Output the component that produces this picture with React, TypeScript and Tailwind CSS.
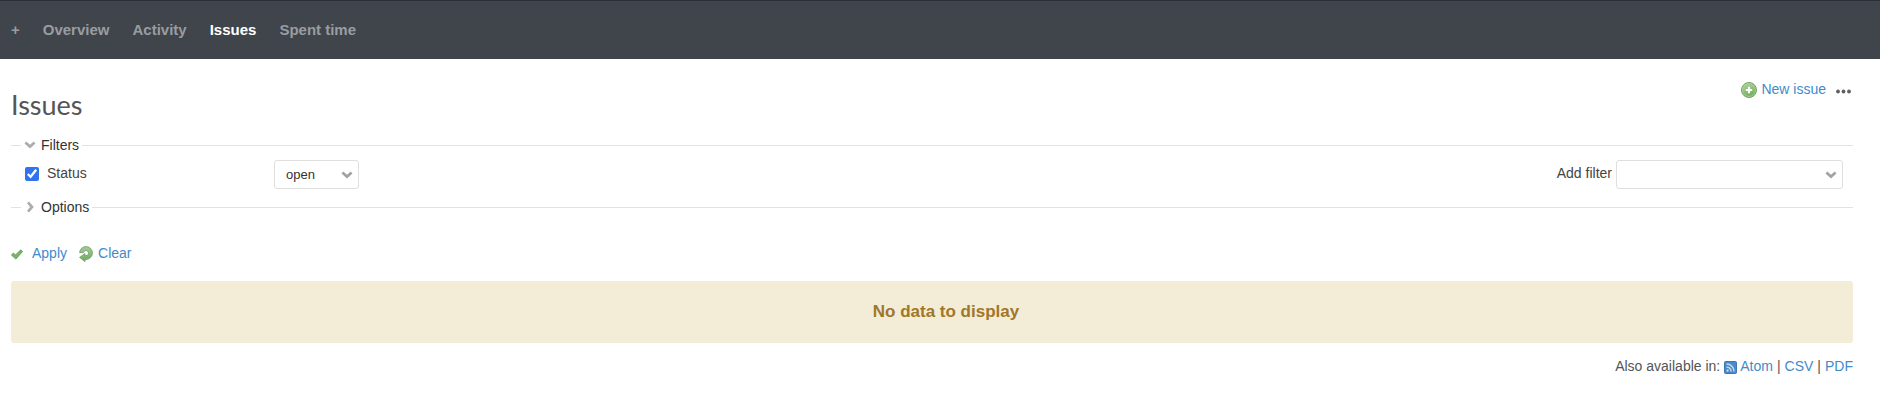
import { useState } from "react";
import type { ReactNode } from "react";

const NAV = ["+", "Overview", "Activity", "Issues", "Spent time"];

function Chevron({ open = true, className = "" }: { open?: boolean; className?: string }) {
  return (
    <svg width="12" height="12" viewBox="0 0 12 12" className={className} fill="none" stroke="currentColor" strokeWidth="2.7" aria-hidden="true">
      <path d={open ? "M1.4 3.6l4.6 4 4.6-4" : "M4 1.4l4 4.6-4 4.6"} />
    </svg>
  );
}

function AddIcon() {
  return (
    <svg width="16" height="16" viewBox="0 0 16 16" aria-hidden="true">
      <defs>
        <linearGradient id="add" x1="0" y1="0" x2="0.4" y2="1">
          <stop offset="0" stopColor="#b9d8a8" />
          <stop offset="1" stopColor="#6fae58" />
        </linearGradient>
      </defs>
      <circle cx="8" cy="8" r="7.5" fill="url(#add)" stroke="#72a365" />
      <circle cx="8" cy="8" r="6.4" fill="none" stroke="#a9cf9a" strokeWidth="0.9" />
      <path d="M8 4.8v6.4M4.8 8h6.4" stroke="#fff" strokeWidth="2.1" />
    </svg>
  );
}

function CheckIcon() {
  return (
    <svg width="12" height="11" viewBox="0 0 12 11" aria-hidden="true">
      <path d="M.4 6L2.4 4.1l2.2 1.8L9.7.8l1.9 1.7-6.7 7.6z" fill="#79b562" stroke="#5d974f" strokeWidth="0.8" strokeLinejoin="round" />
    </svg>
  );
}

function ReloadIcon() {
  return (
    <svg width="14" height="16" viewBox="0 0 14 16" fill="none" aria-hidden="true">
      <defs>
        <linearGradient id="reload" x1="0" y1="0" x2="0" y2="1">
          <stop offset="0" stopColor="#a5cd97" />
          <stop offset="1" stopColor="#6fa662" />
        </linearGradient>
      </defs>
      <path
        d="M.6 6.6A6.4 6.4 0 1 1 7 13.4H6v2.2L.6 11.4 6 7.6v2.1h1A2.6 2.6 0 1 0 4.4 6.6z"
        fill="url(#reload)"
        stroke="#699c5e"
        strokeWidth="0.8"
        strokeLinejoin="round"
      />
    </svg>
  );
}

function FeedIcon() {
  return (
    <svg width="13" height="13" viewBox="0 0 13 13" fill="none" aria-hidden="true">
      <rect x=".5" y=".5" width="12" height="12" rx="1" fill="#4a8ac6" stroke="#3c77b4" />
      <circle cx="3.6" cy="9.6" r="1.1" fill="#d7e6f4" />
      <path d="M2.5 5.9a4.6 4.6 0 0 1 4.6 4.7M2.5 2.9a7.6 7.6 0 0 1 7.6 7.7" stroke="#c3daef" strokeWidth="1.5" />
    </svg>
  );
}

function Section({ title, open, onToggle, children }: { title: string; open: boolean; onToggle: () => void; children?: ReactNode }) {
  return (
    <fieldset className="min-w-0 border-t border-[#e2e2e2]">
      <legend className="ml-[10px] pr-[3px] pl-1 leading-[18px] text-[#333]">
        <button type="button" aria-expanded={open} onClick={onToggle} className="flex items-center gap-1">
          <Chevron open={open} className="-ml-px mr-px text-[#acacac]" />
          {title}
        </button>
      </legend>
      {children}
    </fieldset>
  );
}

const selectClass = "h-[29px] w-full appearance-none rounded-[3px] border border-[#dfdfdf] bg-white pr-7 pl-[11px] text-[13px] text-[#333]";
const linkClass = "text-[#428bca]";

export default function App() {
  const [filters, setFilters] = useState(true);
  const [options, setOptions] = useState(false);
  const [status, setStatus] = useState(true);
  return (
    <div className="bg-white font-['Liberation_Sans',Arial,sans-serif] text-[14px] leading-[18px] text-[#555]">
      <nav className="flex h-[59px] items-center gap-[23px] border-t border-[#2b2f38] bg-[#40444b] px-[11px] text-[15px] font-bold">
        {NAV.map((n) => (
          <a key={n} href="#" className={n === "Issues" ? "text-white" : "text-[#999da1]"}>
            {n}
          </a>
        ))}
      </nav>
      <main className="pr-[27px] pl-[11px]">
        <header className="flex items-start justify-between pt-[20px]">
          <h1 className="mt-2 font-[Lato,sans-serif] text-[27px] leading-[36px]">Issues</h1>
          <div className="flex items-center gap-[5px]">
            <a href="#" className={"flex items-center gap-1 " + linkClass}>
              <span className="pt-[3px]"><AddIcon /></span>
              New issue
            </a>
            <button type="button" aria-label="Actions" className="pt-[5px] pr-[2px] pl-[5px]">
              <svg width="15" height="5" viewBox="0 0 15 5" fill="#606060" aria-hidden="true">
                <circle cx="2" cy="2.5" r="1.9" />
                <circle cx="7.5" cy="2.5" r="1.9" />
                <circle cx="13" cy="2.5" r="1.9" />
              </svg>
            </button>
          </div>
        </header>
        <form className="mt-[13px]" onSubmit={(e) => e.preventDefault()}>
          <Section title="Filters" open={filters} onToggle={() => setFilters(!filters)}>
            {filters && (
              <div className="flex justify-between pt-[6px] pr-[10px] pb-[9px] pl-[14px] text-[#444]">
                <div className="flex">
                  <label className="flex w-[249px] items-start gap-2 pt-[4px]">
                    <input type="checkbox" checked={status} onChange={() => setStatus(!status)} className="mt-[3px] h-[14px] w-[14px] accent-[#2f73f0]" />
                    Status
                  </label>
                  <div className="relative w-[85px]">
                    <select aria-label="Status" className={selectClass}>
                      <option>open</option>
                      <option>closed</option>
                      <option>any</option>
                    </select>
                    <Chevron className="pointer-events-none absolute top-[9px] right-[6px] text-[#a0a3a6]" />
                  </div>
                </div>
                <div className="flex gap-1">
                  <label htmlFor="add-filter" className="pt-[4px]">Add filter</label>
                  <div className="relative w-[227px]">
                    <select id="add-filter" className={selectClass}>
                      <option></option>
                    </select>
                    <Chevron className="pointer-events-none absolute top-[9px] right-[6px] text-[#a0a3a6]" />
                  </div>
                </div>
              </div>
            )}
          </Section>
          <Section title="Options" open={options} onToggle={() => setOptions(!options)} />
          <p className="mt-[27px] flex gap-3">
            <button type="submit" className={"flex items-center gap-[9px] " + linkClass}>
              <span className="pt-[3px]"><CheckIcon /></span>
              Apply
            </button>
            <a href="#" className={"flex items-center gap-[5px] " + linkClass}>
              <span className="pt-[3px]"><ReloadIcon /></span>
              Clear
            </a>
          </p>
        </form>
        <p className="mt-[19px] rounded-[3px] bg-[#f3ecd6] py-[20px] pl-[28px] text-center text-[17px] leading-[22px] font-bold text-[#a07728]">No data to display</p>
        <p className="mt-[14px] flex justify-end gap-1">
          <span>Also available in:</span>
          <a href="#" className={"flex items-center gap-[3px] " + linkClass}>
            <span className="pt-[2px]"><FeedIcon /></span>
            Atom
          </a>
          <span>|</span>
          <a href="#" className={linkClass}>CSV</a>
          <span>|</span>
          <a href="#" className={linkClass}>PDF</a>
        </p>
      </main>
    </div>
  );
}
